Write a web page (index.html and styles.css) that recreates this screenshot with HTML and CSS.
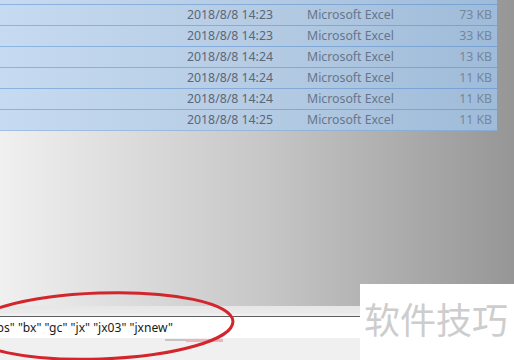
FILE: index.html
```html
<!DOCTYPE html>
<html lang="zh-CN">
<head>
<meta charset="utf-8">
<title>Files</title>
<link rel="stylesheet" href="styles.css">
</head>
<body>
<div class="screen">
  <div class="list">
    <div class="list-top"></div>
    <div class="row"><span class="date">2018/8/8 14:23</span><span class="type">Microsoft Excel</span><span class="size">73 KB</span></div>
    <div class="row"><span class="date">2018/8/8 14:23</span><span class="type">Microsoft Excel</span><span class="size">33 KB</span></div>
    <div class="row"><span class="date">2018/8/8 14:24</span><span class="type">Microsoft Excel</span><span class="size">13 KB</span></div>
    <div class="row"><span class="date">2018/8/8 14:24</span><span class="type">Microsoft Excel</span><span class="size">11 KB</span></div>
    <div class="row"><span class="date">2018/8/8 14:24</span><span class="type">Microsoft Excel</span><span class="size">11 KB</span></div>
    <div class="row"><span class="date">2018/8/8 14:25</span><span class="type">Microsoft Excel</span><span class="size">11 KB</span></div>
  </div>
  <div class="gap"></div>
  <div class="band"></div>
  <div class="field"><span class="field-text">"ps" "bx" "gc" "jx" "jx03" "jxnew"</span></div>
  <div class="foot"></div>
  <div class="watermark">软件技巧</div>
  <svg class="mark" width="514" height="360" viewBox="0 0 514 360">
    <rect x="165" y="339" width="22" height="2" fill="#c4c4c4"/>
    <rect x="186" y="339" width="37" height="3" fill="#ecb4bd"/>
    <ellipse cx="100" cy="326" rx="133" ry="33" transform="rotate(-2 100 326)" fill="none" stroke="#d3262c" stroke-width="3"/>
  </svg>
</div>
</body>
</html>
```

FILE: styles.css
```css
* { box-sizing: border-box; }
html, body { margin: 0; padding: 0; }
body {
  width: 514px;
  height: 360px;
  overflow: hidden;
  font-family: "Noto Sans", "Liberation Sans", sans-serif;
}
.screen {
  position: relative;
  width: 514px;
  height: 360px;
  display: flex;
  flex-direction: column;
  background: linear-gradient(to right, #f0f0f0 0%, #c8c8c8 50%, #969696 100%);
}
.list {
  width: 497px;
  display: flex;
  flex-direction: column;
  background: linear-gradient(to right, #c6dbf1 0%, #b6cce4 50%, #9ebbd9 100%);
  border-bottom: 1px solid rgba(90, 140, 200, 0.35);
}
.list-top {
  height: 4px;
}
.row {
  height: 21px;
  border-top: 1px solid rgba(70, 130, 205, 0.45);
  display: grid;
  grid-template-columns: 120px 1fr auto;
  align-items: center;
  padding: 0 5px 0 187px;
  font-size: 12.3px;
  line-height: 20px;
}
.date { color: #5b6676; }
.type { color: #66758a; }
.size { color: #73879d; text-align: right; }
.gap { flex: 1; }
.band {
  height: 11px;
  background: linear-gradient(to bottom, #e6e6e6 0%, #ebebeb 70%, #f3f3f3 100%);
  border-bottom: 1px solid #5e5e5e;
}
.field {
  height: 21px;
  background: #ffffff;
  overflow: hidden;
  white-space: nowrap;
  font-size: 12.1px;
  line-height: 21px;
  color: #1a1a1a;
}
.field-text {
  display: inline-block;
  margin-left: -8px;
}
.foot {
  height: 22px;
  background: #f0f0f0;
}
.watermark {
  position: absolute;
  left: 360px;
  top: 284px;
  width: 154px;
  height: 76px;
  background: #ffffff;
  padding: 16px 0 0 4px;
  font-family: "Noto Sans CJK SC", sans-serif;
  font-size: 36px;
  line-height: 36px;
  color: #cdcdcd;
  white-space: nowrap;
}
.mark {
  position: absolute;
  left: 0;
  top: 0;
}
```
